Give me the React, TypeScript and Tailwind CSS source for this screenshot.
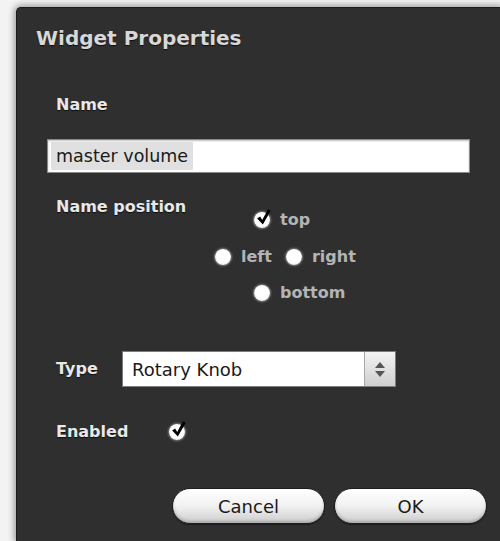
import React, { useState } from 'react';

type Pos = 'top' | 'left' | 'right' | 'bottom';

const label = "text-[16px] font-bold text-[#e8e8e8] [text-shadow:0_1px_1px_rgba(0,0,0,0.7)] leading-[20px]";

function Dot({ on }: { on: boolean }) {
  return (
    <span className="relative inline-block w-[16px] h-[16px] rounded-full bg-[radial-gradient(circle_at_50%_45%,#ffffff_55%,#d2d2d2_100%)] shadow-[0_0_2px_1px_rgba(255,255,255,0.4)]">
      {on && (
        <svg viewBox="0 0 16 16" className="absolute left-[1px] top-[-4px] w-[17px] h-[18px]">
          <path d="M2 9.4 L4.8 7.6 L6.8 10.8 L12.2 0.8 L14.8 2.2 L7.4 15 Z" fill="#000" />
        </svg>
      )}
    </span>
  );
}

function Option({ value, current, onPick }: { value: Pos; current: Pos; onPick: (p: Pos) => void }) {
  return (
    <button type="button" onClick={() => onPick(value)} className="flex items-center h-[22px] gap-[10px]">
      <Dot on={current === value} />
      <span className="text-[16px] font-bold text-[#b4b4b4] leading-[20px]">{value}</span>
    </button>
  );
}

export default function App() {
  const [name, setName] = useState('master volume');
  const [pos, setPos] = useState<Pos>('top');
  const [enabled, setEnabled] = useState(true);

  return (
    <div className="w-[500px] h-[541px] overflow-hidden bg-[#f3f3f3] pl-[16px] pt-[7px] font-['DejaVu_Sans',sans-serif]">
      <div className="h-full bg-[#2f2f2f] rounded-tl-[5px] border-t border-l border-[#1c1c1c] shadow-[0_0_6px_2px_rgba(0,0,0,0.35)] flex flex-col">
        <h1 className="pl-[19px] pt-[18px] h-[42px] text-[20px] leading-[24px] font-bold text-[#d8d8d8] [text-shadow:0_1px_1px_rgba(0,0,0,0.7)]">
          Widget Properties
        </h1>

        <div className={`${label} ml-[39px] mt-[45px]`}>Name</div>

        <div className="ml-[30px] mt-[24px] w-[423px] h-[34px] bg-white border border-[#8a8a8a] shadow-[inset_0_1px_2px_rgba(0,0,0,0.25)] flex items-center pl-[3px]">
          <span className="bg-[#e0e0e0] px-[5px] py-[3px] text-[17.5px] leading-[22px] text-[#1a1a1a]">{name}</span>
          <input className="hidden" value={name} onChange={(e) => setName(e.target.value)} />
        </div>

        <div className="flex ml-[39px] mt-[24px]">
          <div className={`${label} w-[159px]`}>Name position</div>
          <div className="flex flex-col mt-[12px]">
            <div className="ml-[39px]">
              <Option value="top" current={pos} onPick={setPos} />
            </div>
            <div className="flex gap-[14px] mt-[15px]">
              <Option value="left" current={pos} onPick={setPos} />
              <Option value="right" current={pos} onPick={setPos} />
            </div>
            <div className="ml-[39px] mt-[14px]">
              <Option value="bottom" current={pos} onPick={setPos} />
            </div>
          </div>
        </div>

        <div className="flex items-center ml-[39px] mt-[47px]">
          <div className={`${label} w-[66px]`}>Type</div>
          <div className="w-[274px] h-[36px] bg-white border border-[#7c7c7c] flex items-stretch">
            <span className="flex-1 flex items-center pl-[9px] text-[18px] text-[#1a1a1a]">Rotary Knob</span>
            <span className="w-[31px] border-l border-[#a8a8a8] bg-gradient-to-b from-[#f4f4f4] to-[#cfcfcf] flex flex-col items-center justify-center gap-[3px]">
              <svg viewBox="0 0 10 6" className="w-[10px] h-[6px]"><path d="M5 0 L10 6 L0 6 Z" fill="#555" /></svg>
              <svg viewBox="0 0 10 6" className="w-[10px] h-[6px]"><path d="M0 0 L10 0 L5 6 Z" fill="#555" /></svg>
            </span>
          </div>
        </div>

        <div className="flex items-center ml-[39px] mt-[35px] h-[20px]">
          <div className={`${label} w-[113px]`}>Enabled</div>
          <button type="button" onClick={() => setEnabled(!enabled)} className="flex">
            <Dot on={enabled} />
          </button>
        </div>

        <div className="flex justify-end gap-[9px] pr-[13px] mt-[46px]">
          {['Cancel', 'OK'].map((t) => (
            <button
              key={t}
              type="button"
              className="w-[153px] h-[36px] rounded-full border border-[#1e1e1e] bg-gradient-to-b from-white via-[#f1f1f1] to-[#cdcdcd] shadow-[inset_0_-2px_3px_rgba(0,0,0,0.18),0_1px_1px_rgba(0,0,0,0.4)] text-[18px] text-[#1a1a1a] flex items-center justify-center"
            >
              {t}
            </button>
          ))}
        </div>
      </div>
    </div>
  );
}
